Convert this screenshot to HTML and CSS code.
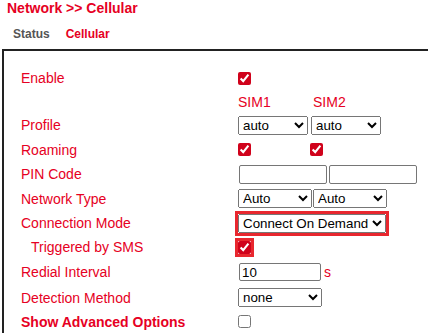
FILE: index.html
```html
<!DOCTYPE html>
<html>
<head>
<meta charset="utf-8">
<link rel="stylesheet" href="styles.css">
</head>
<body>
<h1 class="title">Network &gt;&gt; Cellular</h1>
<div class="tabs"><span class="tab">Status</span><span class="tab active">Cellular</span></div>
<div class="panel">
  <div class="form">
    <div class="label">Enable</div>
    <div class="value"><input type="checkbox" class="cb" checked></div>

    <div class="label"></div>
    <div class="value"><span class="sim sim1">SIM1</span><span class="sim">SIM2</span></div>

    <div class="label">Profile</div>
    <div class="value pair g3"><select class="sel w69"><option>auto</option></select><select class="sel w69"><option>auto</option></select></div>

    <div class="label">Roaming</div>
    <div class="value"><span class="cbcell"><input type="checkbox" class="cb" checked></span><input type="checkbox" class="cb" checked></div>

    <div class="label">PIN Code</div>
    <div class="value pair g2 in1"><input type="text" class="txt w88"><input type="text" class="txt w88"></div>

    <div class="label">Network Type</div>
    <div class="value pair g1"><select class="sel w74"><option>Auto</option></select><select class="sel w74"><option>Auto</option></select></div>

    <div class="label">Connection Mode</div>
    <div class="value"><select class="sel w148 hl"><option>Connect On Demand</option></select></div>

    <div class="label indent">Triggered by SMS</div>
    <div class="value"><input type="checkbox" class="cb hl" checked></div>

    <div class="label">Redial Interval</div>
    <div class="value in1"><input type="text" class="txt w82 tall18" value="10"><span class="unit">s</span></div>

    <div class="label">Detection Method</div>
    <div class="value"><select class="sel w84"><option>none</option></select></div>

    <div class="label bold">Show Advanced Options</div>
    <div class="value"><input type="checkbox" class="cb"></div>
  </div>
</div>
</body>
</html>
```

FILE: styles.css
```css
html, body {
  margin: 0;
  padding: 0;
  background: #fff;
  overflow: hidden;
}
body {
  font-family: "Liberation Sans", Arial, sans-serif;
  color: #e60023;
}
.title {
  margin: 0;
  padding-left: 7px;
  font-size: 14px;
  line-height: 16px;
  font-weight: bold;
  color: #e60023;
}
.tabs {
  margin-top: 10px;
  height: 16px;
  padding-left: 13px;
  display: flex;
  gap: 16px;
  font-size: 12px;
  line-height: 16px;
  font-weight: bold;
}
.tab { color: #555; }
.tab.active { color: #e60023; }
.panel {
  margin-top: 7px;
  margin-left: 2px;
  border-top: 2px solid #222;
  border-left: 2px solid #222;
  padding: 15px 0 0 17px;
}
.form {
  display: grid;
  grid-template-columns: 217px 1fr;
  grid-template-rows: 24px 23px 24px 25px 24px 25px 24px 24px 26px 25px 23px;
  font-size: 14px;
}
.label {
  display: flex;
  align-items: center;
  color: #e60023;
}
.label.indent { padding-left: 10px; }
.label.bold { font-weight: bold; }
.value {
  display: flex;
  align-items: center;
}
.pair.g1 { gap: 1px; }
.pair.g2 { gap: 2px; }
.pair.g3 { gap: 3px; }
.in1 { padding-left: 1px; }
.cb {
  margin: 0;
  width: 13px;
  height: 13px;
  accent-color: #d0021b;
}
.cbcell { width: 72px; display: flex; }
.sim { color: #e60023; }
.sim1 { width: 75px; }
.sel {
  font-family: "Liberation Sans", Arial, sans-serif;
  font-size: 13.333px;
  height: 19px;
  margin: 0;
  color: #000;
  box-sizing: border-box;
}
.w69 { width: 70px; }
.w74 { width: 74px; }
.w84 { width: 84px; }
.w148 { width: 148px; }
.txt {
  font-family: "Liberation Sans", Arial, sans-serif;
  font-size: 13.333px;
  height: 19px;
  margin: 0;
  padding: 1px 2px;
  box-sizing: border-box;
  border: 1px solid #767676;
  border-radius: 2px;
  color: #000;
}
.tall18 { height: 18px; }
.w88 { width: 88px; }
.w82 { width: 82px; }
.hl {
  outline: 3px solid #e8272e;
  outline-offset: 0;
}
.unit {
  margin-left: 3px;
  color: #e60023;
}
```
